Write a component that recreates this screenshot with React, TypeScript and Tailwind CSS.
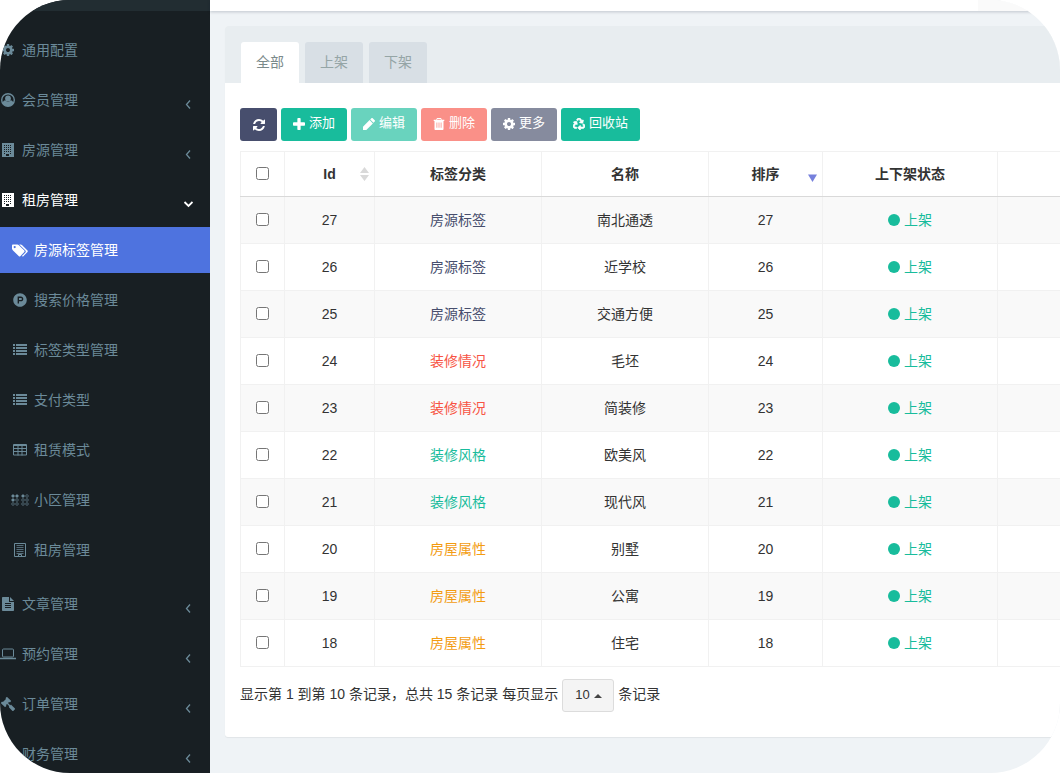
import React from "react";
import { FaGavel, FaProductHunt, FaRecycle } from "react-icons/fa";
import type { IconType } from "react-icons";

type IconProps = { className?: string };

function CogIcon({ className }: IconProps) {
  return (
    <svg viewBox="0 128 1536 1536" className={className} fill="currentColor" aria-hidden="true">
      <path d="M1024 896q0-106-75-181t-181-75-181 75-75 181 75 181 181 75 181-75 75-181zm512-109v222q0 12-8 23t-20 13l-185 28q-19 54-39 91 35 50 107 138 10 12 10 25t-9 23q-27 37-99 108t-94 71q-12 0-26-9l-138-108q-44 23-91 38-16 136-29 186-7 28-36 28H657q-14 0-24.500-8.500T621 1634l-28-184q-49-16-90-37l-141 107q-10 9-25 9-14 0-25-11-126-114-165-168-7-10-7-23 0-12 8-23 15-21 51-66.500t54-70.500q-27-50-41-99L29 1041q-13-2-21-12.500T0 1005V783q0-12 8-23t19-13l186-28q14-46 39-92-40-57-107-138-10-12-10-24 0-10 9-23 26-36 98.500-107.500T337 263q13 0 26 10l138 107q44-23 91-38 16-136 29-186 7-28 36-28h222q14 0 24.500 8.500T915 158l28 184q49 16 90 37l142-107q9-9 24-9 13 0 25 10 129 119 165 170 7 8 7 22 0 12-8 23-15 21-51 66.500t-54 70.500q26 50 41 98l183 28q13 2 21 12.500t8 23.500z" />
    </svg>
  );
}

function PencilIcon({ className }: IconProps) {
  return (
    <svg viewBox="0 0 12 12" className={className} fill="currentColor" aria-hidden="true">
      <path d="M0 12V8.700L6.600 2.100l3.300 3.300L3.300 12zM7.200 1.500L8.400.3c.4-.4.9-.4 1.300 0l2 2c.4.4.4.9 0 1.300l-1.200 1.200z" />
    </svg>
  );
}

function BuildingIcon({ className }: IconProps) {
  return (
    <svg viewBox="0 0 12 14" className={className} fill="currentColor" fillRule="evenodd" aria-hidden="true">
      <path d="M0 0h12v14H0zM2 2v1h1V2zm2 0v1h1V2zm2 0v1h1V2zm2 0v1h1V2zM2 4v1h1V4zm2 0v1h1V4zm2 0v1h1V4zm2 0v1h1V4zM2 6v1h1V6zm2 0v1h1V6zm2 0v1h1V6zm2 0v1h1V6zM2 8v1h1V8zm2 0v1h1V8zm2 0v1h1V8zm2 0v1h1V8zM2 10v1h1v-1zm6 0v1h1v-1zM4 11v2h3v-2z" />
    </svg>
  );
}

function BuildingOutlineIcon({ className }: IconProps) {
  return (
    <svg viewBox="0 0 12 14" className={className} fill="none" stroke="currentColor" aria-hidden="true">
      <path d="M.5.5h11v13H.5z" />
      <path d="M2.500 2.500h7M2.500 4.500h7M2.500 6.500h7M2.500 8.500h7M2.500 10.500h7" strokeOpacity=".75" />
      <path d="M4.500 13.500v-2h3v2" />
    </svg>
  );
}

function TableIcon({ className }: IconProps) {
  return (
    <svg viewBox="0 0 14 12" className={className} fill="none" stroke="currentColor" aria-hidden="true">
      <path d="M.5.5h13v10.500H.5zM.5 1.500h13M.5 4.500h13M.5 7.500h13M5 1v10.500M9 1v10.500" />
    </svg>
  );
}

function LaptopIcon({ className }: IconProps) {
  return (
    <svg viewBox="0 0 16 12" className={className} fill="none" stroke="currentColor" aria-hidden="true">
      <rect x="2.500" y="1" width="11" height="8" rx="1" />
      <path d="M0 10.500h16" strokeWidth="1.600" />
    </svg>
  );
}

function UserCircleIcon({ className }: IconProps) {
  return (
    <svg viewBox="0 0 14 14" className={className} aria-hidden="true">
      <circle cx="7" cy="7" r="6.300" fill="none" stroke="currentColor" strokeWidth="1.400" />
      <circle cx="7" cy="5.400" r="2.900" fill="currentColor" />
      <path d="M1.500 10.500c.5-2.200 1.500-3.200 2.800-3.300 1.500 1.600 3.900 1.600 5.400 0 1.300.1 2.300 1.100 2.800 3.300-2.500 3.500-8.500 3.500-11 0z" fill="currentColor" />
    </svg>
  );
}

function TagsIcon({ className }: IconProps) {
  return (
    <svg viewBox="0 0 16 13" className={className} fill="currentColor" fillRule="evenodd" aria-hidden="true">
      <path d="M0 1.500C0 1 .5.500 1 .500h4.300c.6 0 1.200.3 1.600.7l5.400 5.400c.4.4.4 1 0 1.400l-4 4.200c-.4.4-1 .4-1.400 0L1 6.500C.5 6 0 5.300 0 4.800zM2.700 2a1.100 1.100 0 1 0 0 2.200 1.100 1.100 0 0 0 0-2.200z" />
      <path d="M7.200.5h1.400c.6 0 1.200.3 1.600.7l5.300 5.400c.4.4.4 1 0 1.400l-4.100 4.200c-.5.5-1 .4-1.500-.1l3.500-3.700c.5-.5.5-1.500 0-2z" />
    </svg>
  );
}

function ListIcon({ className }: IconProps) {
  return (
    <svg viewBox="0 0 14 12" className={className} fill="currentColor" aria-hidden="true">
      <path d="M0 0h2v2H0zM3 0h11v2H3zM0 3h2v2H0zM3 3h11v2H3zM0 6h2v2H0zM3 6h11v2H3zM0 9h2v2H0zM3 9h11v2H3z" />
    </svg>
  );
}

const brailleDots = [
  { x: 2, y: 2, on: true },
  { x: 6, y: 2, on: true },
  { x: 12, y: 2, on: true },
  { x: 16, y: 2, on: false },
  { x: 2, y: 6, on: true },
  { x: 6, y: 6, on: false },
  { x: 12, y: 6, on: false },
  { x: 16, y: 6, on: false },
  { x: 2, y: 10, on: false },
  { x: 6, y: 10, on: false },
  { x: 12, y: 10, on: false },
  { x: 16, y: 10, on: false },
];

function BrailleIcon({ className }: IconProps) {
  return (
    <svg viewBox="0 0 18 12" className={className} stroke="currentColor" aria-hidden="true">
      {brailleDots.map(({ x, y, on }) => (
        <circle key={`${x}-${y}`} cx={x} cy={y} r="1.300" strokeWidth=".6" fill={on ? "currentColor" : "none"} />
      ))}
    </svg>
  );
}

function FileTextIcon({ className }: IconProps) {
  return (
    <svg viewBox="0 0 12 14" className={className} fill="currentColor" fillRule="evenodd" aria-hidden="true">
      <path d="M.8 0H7v5h5v8.200c0 .5-.3.8-.8.800H.8c-.5 0-.8-.3-.8-.8V.8C0 .3.300 0 .800 0zM3 6v1h6V6zm0 2v1h6V8zm0 2v1h6v-1z" />
      <path d="M8 0l4 4H8z" />
    </svg>
  );
}

function AngleIcon({ open }: { open?: boolean }) {
  return (
    <svg viewBox="0 0 10 10" className="mt-2 h-2.5 w-2.5" fill="none" stroke="currentColor" aria-hidden="true">
      {open ? <path d="M1.500 3L5.500 7l4-4" strokeWidth="1.800" /> : <path d="M7 1.500L3.500 5.500 7 9.500" strokeWidth="1.300" />}
    </svg>
  );
}

function RefreshIcon({ className }: IconProps) {
  return (
    <svg viewBox="0 0 1536 1536" className={className} fill="currentColor" aria-hidden="true">
      <path d="M1511 928q0 5-1 7-64 268-268 434.500T764 1536q-146 0-282.500-55T238 1324l-129 129q-19 19-45 19t-45-19-19-45V960q0-26 19-45t45-19h448q26 0 45 19t19 45-19 45l-137 137q71 66 161 102t187 36q134 0 250-65t186-179q11-17 53-117 8-23 30-23h192q13 0 22.500 9.500T1511 928zm25-800v448q0 26-19 45t-45 19h-448q-26 0-45-19t-19-45 19-45l138-138Q969 256 768 256q-134 0-250 65T332 500q-11 17-53 117-8 23-30 23H50q-13 0-22.500-9.500T18 608v-7q65-268 270-434.500T768 0q146 0 284 55.500T1297 212l130-129q19-19 45-19t45 19 19 45z" />
    </svg>
  );
}

function PlusIcon({ className }: IconProps) {
  return (
    <svg viewBox="0 0 1408 1408" className={className} fill="currentColor" aria-hidden="true">
      <path d="M1408 608v192q0 40-28 68t-68 28H896v416q0 40-28 68t-68 28H608q-40 0-68-28t-28-68V896H96q-40 0-68-28T0 800V608q0-40 28-68t68-28h416V96q0-40 28-68t68-28h192q40 0 68 28t28 68v416h416q40 0 68 28t28 68z" />
    </svg>
  );
}

function TrashIcon({ className }: IconProps) {
  return (
    <svg viewBox="0 0 12 12" className={className} fill="currentColor" fillRule="evenodd" aria-hidden="true">
      <path d="M4 0h4l.8 1.700h2.500v1.200h-.8V11c0 .6-.4 1-1 1h-7c-.6 0-1-.4-1-1V2.900H.7V1.700h2.500zm.4.900L4 1.700h4L7.600.900zM3.500 4.500v5.300h.8V4.500zm2.100 0v5.300h.8V4.500zm2.100 0v5.300h.8V4.500z" />
    </svg>
  );
}

function RecycleIcon({ className }: IconProps) {
  return <FaRecycle className={className} strokeWidth={28} aria-hidden="true" />;
}

type Icon = IconType | ((props: IconProps) => React.JSX.Element);
type NavItem = { label: string; icon?: Icon; size?: string; children?: NavItem[]; group?: boolean };

const nav: NavItem[] = [
  { label: "通用配置", icon: CogIcon, size: "h-3 w-3" },
  { label: "会员管理", icon: UserCircleIcon, size: "h-3.5 w-3.5", group: true },
  { label: "房源管理", icon: BuildingIcon, size: "h-3.5 w-3", group: true },
  {
    label: "租房管理",
    icon: BuildingIcon,
    size: "h-3.5 w-3",
    group: true,
    children: [
      { label: "房源标签管理", icon: TagsIcon, size: "h-[13px] w-4" },
      { label: "搜索价格管理", icon: FaProductHunt, size: "h-3.5 w-3.5" },
      { label: "标签类型管理", icon: ListIcon, size: "h-3 w-3.5" },
      { label: "支付类型", icon: ListIcon, size: "h-3 w-3.5" },
      { label: "租赁模式", icon: TableIcon, size: "h-3 w-3.5" },
      { label: "小区管理", icon: BrailleIcon, size: "h-3 w-[18px]" },
      { label: "租房管理", icon: BuildingOutlineIcon, size: "h-3.5 w-3" },
    ],
  },
  { label: "文章管理", icon: FileTextIcon, size: "h-3.5 w-3", group: true },
  { label: "预约管理", icon: LaptopIcon, size: "h-3 w-4", group: true },
  { label: "订单管理", icon: FaGavel, size: "h-3.5 w-3.5 -scale-x-100", group: true },
  { label: "财务管理", group: true },
];

function NavLink({ item, sub, active }: { item: NavItem; sub?: boolean; active?: boolean }) {
  const open = Boolean(item.children);
  const ItemIcon = item.icon;
  const tone = active ? "bg-[#4e73df] text-white" : open ? "text-white" : "text-[#6b8a99]";
  return (
    <div className="py-0.5">
      <a href="#" className={`flex h-[46px] items-center gap-1.5 pr-[17px] ${sub ? "pl-3" : ""} ${tone}`}>
        <span className="flex w-4 shrink-0 justify-center">
          {ItemIcon && <ItemIcon className={`shrink-0 ${item.size}`} />}
        </span>
        <span className="flex-1">{item.label}</span>
        {item.group && <AngleIcon open={open} />}
      </a>
    </div>
  );
}

function Sidebar() {
  return (
    <aside className="w-[210px] shrink-0 bg-[#181f23]">
      <div className="h-[11px] bg-[#222d32]" />
      <nav className="pt-3.5">
        <ul>
          {nav.map((item) => (
            <li key={item.label}>
              <NavLink item={item} />
              {item.children && (
                <ul className="pb-1">
                  {item.children.map((child, i) => (
                    <li key={child.label}>
                      <NavLink item={child} sub active={i === 0} />
                    </li>
                  ))}
                </ul>
              )}
            </li>
          ))}
        </ul>
      </nav>
    </aside>
  );
}

const tools: { label: string; icon: Icon; color: string }[] = [
  { label: "添加", icon: PlusIcon, color: "bg-[#18bc9c]" },
  { label: "编辑", icon: PencilIcon, color: "bg-[#69d3be]" },
  { label: "删除", icon: TrashIcon, color: "bg-[#fa9088]" },
  { label: "更多", icon: CogIcon, color: "bg-[#868b9e]" },
  { label: "回收站", icon: RecycleIcon, color: "bg-[#18bc9c]" },
];

function Toolbar() {
  return (
    <div className="flex gap-1 text-[13px] text-white">
      <button type="button" aria-label="刷新" className="flex h-[33px] w-[37px] items-center justify-center rounded-[3px] bg-[#474e6d]">
        <RefreshIcon className="h-3 w-3" />
      </button>
      {tools.map(({ label, icon: ToolIcon, color }) => (
        <button key={label} type="button" className={`flex h-[33px] items-center gap-1 rounded-[3px] px-3 pb-0.5 ${color}`}>
          <ToolIcon className="h-3 w-3" />
          {label}
        </button>
      ))}
    </div>
  );
}

const navy = "text-[#474e6d]";
const red = "text-[#f75444]";
const green = "text-[#18bc9c]";
const orange = "text-[#f39c12]";

const rows = [
  { id: 27, tag: "房源标签", color: navy, name: "南北通透" },
  { id: 26, tag: "房源标签", color: navy, name: "近学校" },
  { id: 25, tag: "房源标签", color: navy, name: "交通方便" },
  { id: 24, tag: "装修情况", color: red, name: "毛坯" },
  { id: 23, tag: "装修情况", color: red, name: "简装修" },
  { id: 22, tag: "装修风格", color: green, name: "欧美风" },
  { id: 21, tag: "装修风格", color: green, name: "现代风" },
  { id: 20, tag: "房屋属性", color: orange, name: "别墅" },
  { id: 19, tag: "房屋属性", color: orange, name: "公寓" },
  { id: 18, tag: "房屋属性", color: orange, name: "住宅" },
];

const cell = "border border-[#f1f1f1] p-0 last:border-r-0";
const headCell = `${cell} border-b-[#d9d9d9]`;

function SortHeader({ label, sorted }: { label: string; sorted?: boolean }) {
  return (
    <div className="flex items-center px-1">
      <span className="w-3" />
      <span className="flex-1">{label}</span>
      <svg viewBox="0 0 12 16" className="h-4 w-3" aria-hidden="true">
        {sorted ? (
          <path d="M2 8.500h9L6.500 16z" fill="#7680dc" />
        ) : (
          <path d="M2 7h9L6.500 1zM2 9h9l-4.500 6z" fill="#d9d9d9" />
        )}
      </svg>
    </div>
  );
}

function TagTable() {
  return (
    <table className="mt-2.5 w-full table-fixed border-collapse text-center">
      <colgroup>
        <col className="w-[44px]" />
        <col className="w-[90px]" />
        <col className="w-[167px]" />
        <col className="w-[167px]" />
        <col className="w-[114px]" />
        <col className="w-[175px]" />
        <col />
      </colgroup>
      <thead>
        <tr className="h-[45px]">
          <th className={headCell}>
            <input type="checkbox" aria-label="全选" className="mb-1 align-middle" />
          </th>
          <th className={headCell}><SortHeader label="Id" /></th>
          <th className={headCell}>标签分类</th>
          <th className={headCell}>名称</th>
          <th className={headCell}><SortHeader label="排序" sorted /></th>
          <th className={headCell}>上下架状态</th>
          <th className={headCell} />
        </tr>
      </thead>
      <tbody>
        {rows.map((row) => (
          <tr key={row.id} className="h-[47px] odd:bg-[#f9f9f9]">
            <td className={cell}>
              <input type="checkbox" aria-label={row.name} className="mb-1 align-middle" />
            </td>
            <td className={cell}>{row.id}</td>
            <td className={cell}><a href="#" className={row.color}>{row.tag}</a></td>
            <td className={cell}>{row.name}</td>
            <td className={cell}>{row.id}</td>
            <td className={cell}>
              <span className="flex items-center justify-center gap-1 text-[#18bc9c]">
                <span className="h-3 w-3 rounded-full bg-[#18bc9c]" />
                上架
              </span>
            </td>
            <td className={cell} />
          </tr>
        ))}
      </tbody>
    </table>
  );
}

function Pagination() {
  return (
    <div className="mt-3 flex gap-1">
      <label htmlFor="page-size" className="leading-[30px]">
        显示第 1 到第 10 条记录，总共 15 条记录 每页显示
      </label>
      <span className="relative">
        <select
          id="page-size"
          defaultValue="10"
          className="h-[33px] w-[52px] appearance-none rounded-[3px] border border-[#dcdcdc] bg-[#f4f4f4] pl-3 text-[13px]"
        >
          <option>10</option>
          <option>25</option>
          <option>50</option>
        </select>
        <svg viewBox="0 0 8 4" className="pointer-events-none absolute top-[15px] right-3 h-1 w-2" aria-hidden="true">
          <path d="M0 4h8L4 0z" fill="#444" />
        </svg>
      </span>
      <span className="leading-[30px]">条记录</span>
    </div>
  );
}

export default function App() {
  return (
    <div className="flex h-screen overflow-hidden rounded-[70px] bg-[#eff3f6] font-['Liberation_Sans','Noto_Sans_CJK_SC',sans-serif] text-sm text-[#333]">
      <Sidebar />
      <main className="min-w-0 flex-1">
        <header className="flex h-[11px] justify-end bg-white shadow-[0_1px_3px_rgba(0,20,40,0.2)]">
          <div className="w-[82px] bg-[#fafafa]" />
        </header>
        <section className="mt-[15px] ml-[15px] rounded-[3px] bg-white shadow-[0_1px_1px_rgba(0,0,0,0.06)]">
          <div className="flex gap-1.5 rounded-tl-[3px] bg-[#e8edf0] pt-4 pl-4">
            {["全部", "上架", "下架"].map((tab, i) => (
              <button
                key={tab}
                type="button"
                className={`h-[41px] w-[58px] rounded-t-[3px] pb-0.5 ${i === 0 ? "bg-white text-[#7b8a8b]" : "bg-[#d8dfe5] text-[#95a5a6]"}`}
              >
                {tab}
              </button>
            ))}
          </div>
          <div className="pt-[25px] pb-[25px] pl-[15px]">
            <Toolbar />
            <TagTable />
            <Pagination />
          </div>
        </section>
      </main>
    </div>
  );
}
